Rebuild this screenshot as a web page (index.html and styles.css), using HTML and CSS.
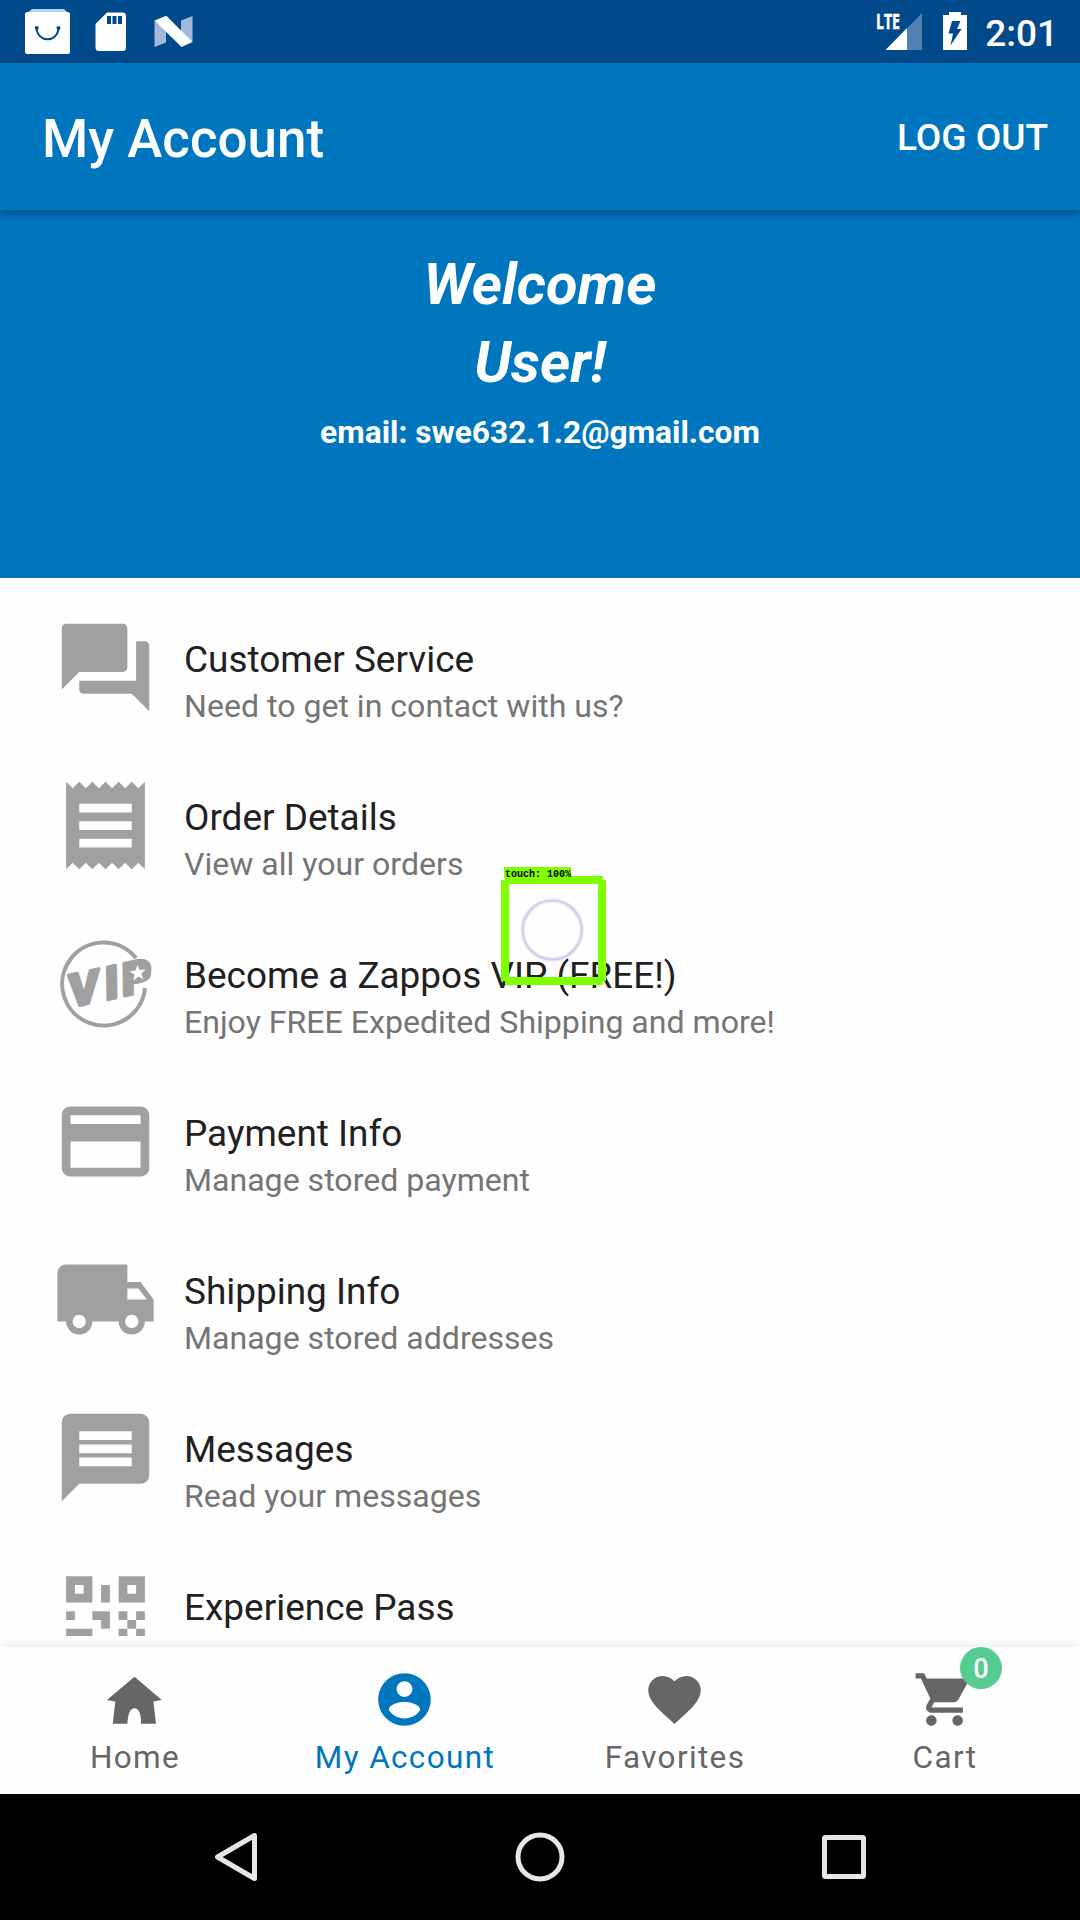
FILE: index.html
```html
<!DOCTYPE html>
<html lang="en">
<head>
<meta charset="utf-8">
<title>My Account</title>
<link rel="stylesheet" href="styles.css">
</head>
<body>
<div class="screen">
  <div class="status-bar">
    <svg class="status-left" viewBox="0 0 200 63">
      <path fill="#b5d3f0" d="M32 9h32l6 6H25z"/>
      <rect x="25" y="12" width="45" height="42" rx="2.500" fill="#fff"/>
      <path fill="none" stroke="#00498b" stroke-width="2" d="M36.500 28c1 15 21 15 22 0"/>
      <circle cx="36.700" cy="28" r="2" fill="#00498b"/><circle cx="58.500" cy="28" r="2" fill="#00498b"/>
      <path fill="#fff" d="M107 12.500h15.500q3.500 0 3.500 3.500v31.500q0 3.500-3.500 3.500H99q-3.500 0-3.500-3.500V24z"/>
      <path fill="#00498b" d="M107 16h4v8h-4zM112.500 16h4v8h-4zM118 16h4v8h-4z"/>
      <path fill="#a3b9dc" d="M154.500 20.500l11.500 10v12l-11.500 4.500zM192.500 16v26l-11.500-9V20.500z"/>
      <path fill="#fff" d="M154.500 20.500l11.800-4.700 26.200 26.200-11 5z"/>
    </svg>
    <div class="status-right">
      <svg class="signal" viewBox="0 0 50 40">
        <path fill="#5282b2" d="M46 0v37H10z"/>
        <path fill="#fff" d="M31 15V37H9.500z"/>
        <text class="lte" x="0" y="16.300" textLength="24" lengthAdjust="spacingAndGlyphs">LTE</text>
      </svg>
      <svg class="battery" viewBox="0 0 24 38">
        <path fill="#fff" d="M0 3h6V0h12v3h6v35H0z"/>
        <path fill="#00498b" d="M9 9h8.500l-3.500 8h4.500L7.500 33.500l2.500-12H5.500z"/>
      </svg>
      <span class="clock">2:01</span>
    </div>
  </div>

  <header class="toolbar">
    <h1 class="toolbar-title">My Account</h1>
    <span class="logout">LOG OUT</span>
  </header>

  <section class="welcome">
    <div class="greeting">Welcome<br>User!</div>
    <div class="email">email: swe632.1.2@gmail.com</div>
  </section>

  <main class="list">
    <div class="row">
      <svg class="row-icon" viewBox="0 0 24 24"><path d="M21 6h-2v9H6v2c0 .55.45 1 1 1h11l4 4V7c0-.55-.45-1-1-1zm-4 6V3c0-.55-.45-1-1-1H3c-.55 0-1 .45-1 1v14l4-4h10c.55 0 1-.45 1-1z"/></svg>
      <div class="row-text"><div class="row-title">Customer Service</div><div class="row-sub">Need to get in contact with us?</div></div>
    </div>
    <div class="row">
      <svg class="row-icon" viewBox="0 0 24 24"><path d="M18 17H6v-2h12v2zm0-4H6v-2h12v2zm0-4H6V7h12v2zM3 22l1.500-1.500L6 22l1.500-1.500L9 22l1.500-1.500L12 22l1.500-1.500L15 22l1.500-1.500L18 22l1.500-1.500L21 22V2l-1.500 1.500L18 2l-1.500 1.500L15 2l-1.500 1.500L12 2l-1.500 1.500L9 2 7.500 3.500 6 2 4.500 3.500 3 2v20z"/></svg>
      <div class="row-text"><div class="row-title">Order Details</div><div class="row-sub">View all your orders</div></div>
    </div>
    <div class="row">
      <svg class="row-icon" viewBox="0 0 105 105">
        <path fill="none" stroke="#a0a0a0" stroke-width="4" d="M83 27A41.500 41.500 0 1 0 92 57"/>
        <text class="vip" transform="translate(15 77) skewY(-11) rotate(-1)" x="1 37 54" y="0">VIP</text>
        <ellipse cx="86" cy="43" rx="12" ry="9"/>
        <path fill="#fff" d="M84.500 34l2.200 5 6-.5-4.500 4.200 2.500 5.800-5.200-3-5.200 4.300 1.300-6.300-5.200-3 6-1z"/>
      </svg>
      <div class="row-text"><div class="row-title">Become a Zappos VIP (FREE!)</div><div class="row-sub">Enjoy FREE Expedited Shipping and more!</div></div>
    </div>
    <div class="row">
      <svg class="row-icon" viewBox="0 0 24 24"><path d="M20 4H4c-1.110 0-1.990.89-1.990 2L2 18c0 1.110.89 2 2 2h16c1.110 0 2-.89 2-2V6c0-1.110-.89-2-2-2zm0 14H4v-6h16v6zm0-10H4V6h16v2z"/></svg>
      <div class="row-text"><div class="row-title">Payment Info</div><div class="row-sub">Manage stored payment</div></div>
    </div>
    <div class="row">
      <svg class="row-icon" viewBox="0 0 24 24"><path d="M20 8h-3V4H3c-1.100 0-2 .9-2 2v11h2c0 1.660 1.340 3 3 3s3-1.340 3-3h6c0 1.660 1.340 3 3 3s3-1.340 3-3h2v-5l-3-4zM6 18.500c-.83 0-1.500-.67-1.500-1.500s.67-1.500 1.500-1.500 1.500.67 1.500 1.500-.67 1.500-1.500 1.500zm13.500-9l1.960 2.500H17V9.500h2.500zm-1.500 9c-.83 0-1.500-.67-1.500-1.500s.67-1.500 1.500-1.500 1.500.67 1.500 1.500-.67 1.500-1.500 1.500z"/></svg>
      <div class="row-text"><div class="row-title">Shipping Info</div><div class="row-sub">Manage stored addresses</div></div>
    </div>
    <div class="row">
      <svg class="row-icon" viewBox="0 0 24 24"><path d="M20 2H4c-1.100 0-1.990.9-1.990 2L2 22l4-4h14c1.100 0 2-.9 2-2V4c0-1.100-.9-2-2-2zM6 9h12v2H6V9zm12 5H6v-2h12v2zm0-6H6V6h12v2z"/></svg>
      <div class="row-text"><div class="row-title">Messages</div><div class="row-sub">Read your messages</div></div>
    </div>
    <div class="row">
      <svg class="row-icon" viewBox="0 0 24 24"><path fill-rule="evenodd" d="M3 3h6v6H3zM5 5v2h2V5zM15 3h6v6h-6zM17 5v2h2V5zM11 5h2v4h-2zM3 11h2v2H3zM9 11h4v4h-2v-2H9zM15 11h2v2h-2zM19 11h2v2h-2zM17 13h2v2h-2zM15 15h2v2h-2zM19 15h2v2h-2zM3 15h6v6H3zM5 17v2h2v-2z"/></svg>
      <div class="row-text"><div class="row-title">Experience Pass</div></div>
    </div>
  </main>

  <nav class="tabs">
    <div class="tab">
      <svg class="tab-icon" viewBox="0 0 24 24"><path d="M12 3.300l10.400 8.900-3.200.6 1 8.400h-5.700c0-3.500-.7-5.900-2.500-5.900s-2.500 2.400-2.700 5.900H3.700l1-8.400-3.200-.6z"/></svg>
      <span class="tab-label">Home</span>
    </div>
    <div class="tab tab-active">
      <svg class="tab-icon" viewBox="0 0 24 24"><path d="M12 2C6.480 2 2 6.480 2 12s4.480 10 10 10 10-4.480 10-10S17.520 2 12 2zm0 3c1.660 0 3 1.340 3 3s-1.340 3-3 3-3-1.340-3-3 1.340-3 3-3zm0 14.200c-2.500 0-4.710-1.280-6-3.220.03-1.990 4-3.080 6-3.080 1.990 0 5.970 1.090 6 3.080-1.290 1.940-3.500 3.220-6 3.220z"/></svg>
      <span class="tab-label">My Account</span>
    </div>
    <div class="tab">
      <svg class="tab-icon" viewBox="0 0 24 24"><path d="M12 21.350l-1.450-1.320C5.400 15.360 2 12.280 2 8.500 2 5.420 4.420 3 7.500 3c1.740 0 3.410.81 4.500 2.090C13.090 3.810 14.760 3 16.500 3 19.580 3 22 5.420 22 8.500c0 3.780-3.400 6.860-8.550 11.540L12 21.350z"/></svg>
      <span class="tab-label">Favorites</span>
    </div>
    <div class="tab">
      <svg class="tab-icon" viewBox="0 0 24 24"><path d="M7 18c-1.100 0-1.990.9-1.990 2S5.900 22 7 22s2-.9 2-2-.9-2-2-2zM1 2v2h2l3.600 7.590-1.350 2.450c-.16.28-.25.61-.25.96 0 1.100.9 2 2 2h12v-2H7.420c-.14 0-.25-.11-.25-.25l.03-.12.9-1.630h7.450c.75 0 1.410-.41 1.750-1.030l3.580-6.490c.08-.14.12-.31.12-.48 0-.55-.45-1-1-1H5.210l-.94-2H1zm16 16c-1.100 0-1.990.9-1.990 2s.89 2 1.990 2 2-.9 2-2-.9-2-2-2z"/></svg>
      <span class="tab-label">Cart</span>
      <span class="badge">0</span>
    </div>
  </nav>

  <div class="system-nav">
    <svg viewBox="0 0 64 64"><path d="M13.500 32L50.500 10.500v43z"/></svg>
    <svg viewBox="0 0 64 64"><circle cx="32" cy="32" r="22"/></svg>
    <svg viewBox="0 0 64 64"><rect x="12.500" y="12.500" width="39" height="39" rx="1"/></svg>
  </div>

  <div class="touch">
    <svg class="touch-frame" viewBox="0 0 105 109">
      <circle cx="51.200" cy="54" r="29.500" fill="none" stroke="#efeffb" stroke-width="5"/>
      <circle cx="51.200" cy="54" r="29.500" fill="none" stroke="#cfcfe8" stroke-width="2.200"/>
      <path fill="#80ff00" d="M4 0h98v8H4zM4 101h98v8H4zM0 4h8v101H0zM97 4h8v101h-8z"/>
    </svg>
    <span class="touch-label">touch: 100%</span>
  </div>
</div>
</body>
</html>
```
FILE: styles.css
```css
* { box-sizing: border-box; }

body {
  margin: 0;
  font-family: Roboto, "Liberation Sans", sans-serif;
}

.screen {
  position: relative;
  display: flex;
  flex-direction: column;
  width: 1080px;
  height: 1920px;
  overflow: hidden;
  background: #fefefe;
}

.status-bar {
  display: flex;
  justify-content: space-between;
  height: 63px;
  background: #00498b;
}

.status-left { width: 200px; height: 63px; }

.status-right {
  display: flex;
  align-items: flex-start;
  padding: 12px 22px 0 0;
}

.signal { width: 50px; height: 40px; margin-top: 1px; overflow: visible; }

.lte {
  font: 700 22px "Open Sans", sans-serif;
  fill: #fff;
  stroke: #fff;
  stroke-width: 0.6px;
}

.battery { width: 24px; height: 38px; margin-left: 17px; }

.clock {
  margin-left: 18.5px;
  color: #fff;
  font-size: 37px;
  font-weight: 500;
  line-height: 43px;
}

.toolbar {
  position: relative;
  z-index: 1;
  display: flex;
  justify-content: space-between;
  align-items: center;
  height: 147px;
  padding: 0 32px 0 42px;
  background: #0076be;
  color: #fff;
  box-shadow: 0 4px 9px rgba(0, 30, 60, 0.45);
}

.toolbar-title {
  margin: 4px 0 0;
  font-size: 52.9px;
  font-weight: 500;
}

.logout { margin-top: 1px; font-size: 37px; font-weight: 500; }

.welcome {
  height: 368px;
  padding-top: 35px;
  background: #0076be;
  color: #fff;
  text-align: center;
  font-weight: 700;
}

.greeting {
  font-size: 57.75px;
  font-style: italic;
  line-height: 78px;
}

.email {
  margin-top: 13px;
  font-size: 31.7px;
  line-height: 37px;
}

.list {
  height: 1058px;
  padding-top: 10px;
  overflow: hidden;
}

.row {
  display: flex;
  gap: 26.5px;
  height: 158px;
  padding-left: 52.5px;
}

.row-icon {
  width: 105px;
  height: 105px;
  margin-top: 26.5px;
  fill: #a0a0a0;
}

.vip {
  font: 900 46px Roboto, sans-serif;
  stroke: #a0a0a0;
  stroke-width: 3px;
  stroke-linejoin: round;
}

.row-text {
  display: flex;
  flex-direction: column;
  gap: 6px;
  padding-top: 50px;
}

.row-title {
  color: #212121;
  font-size: 36.95px;
  line-height: 43px;
}

.row-sub {
  color: #757575;
  font-size: 32.1px;
  line-height: 38px;
}

.tabs {
  display: grid;
  grid-template-columns: repeat(4, 1fr);
  height: 147px;
  margin-top: 11px;
  background: #fefefe;
  box-shadow: 0 -2px 10px rgba(0, 0, 0, 0.08);
}

.tab {
  position: relative;
  display: flex;
  flex-direction: column;
  align-items: center;
  padding-top: 20.5px;
  color: #666;
}

.tab-active { color: #0076be; }

.tab-icon { width: 63px; height: 63px; margin-right: 1px; fill: currentColor; }

.tab-label {
  margin-top: 8px;
  font-size: 31.5px;
  letter-spacing: 1.35px;
  line-height: 37px;
}

.badge {
  position: absolute;
  top: 0;
  left: 150px;
  width: 42px;
  height: 42px;
  border-radius: 50%;
  background: #55cc92;
  color: #fff;
  font-size: 27px;
  font-weight: 500;
  line-height: 44px;
  text-align: center;
}

.system-nav {
  display: grid;
  grid-template-columns: repeat(3, 304px);
  place-content: center;
  justify-items: center;
  height: 126px;
  background: #000;
}

.system-nav svg {
  width: 64px;
  height: 64px;
  fill: none;
  stroke: #e6e6e6;
  stroke-width: 5;
  stroke-linejoin: round;
}

.touch {
  position: absolute;
  z-index: 2;
  left: 501px;
  top: 876px;
}

.touch-frame { display: block; width: 105px; height: 109px; }

.touch-label {
  position: absolute;
  left: 3px;
  top: -9px;
  width: 67px;
  height: 11px;
  padding-left: 1px;
  background: #80ff00;
  color: #000;
  font: 700 10px/15px "Liberation Mono", monospace;
  white-space: nowrap;
}
```
